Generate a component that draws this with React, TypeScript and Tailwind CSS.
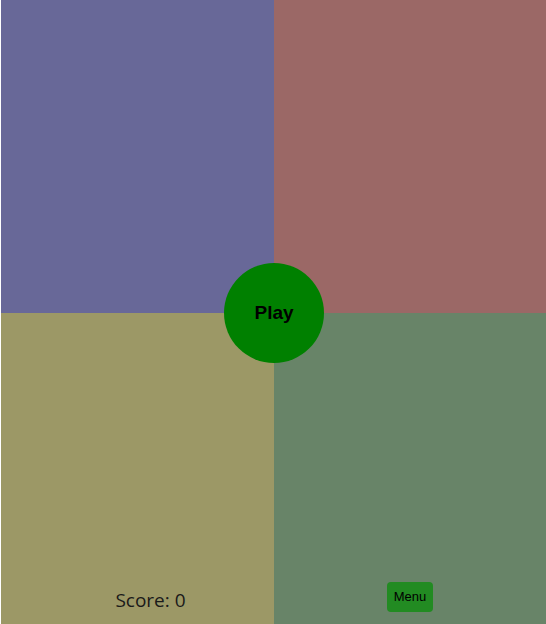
import React from "react";

export default function App() {
  return (
    <div className="relative w-[546px] h-[624px] overflow-hidden bg-white pl-px" style={{ fontFamily: '"Liberation Sans", Arial, sans-serif' }}>
      <div className="grid grid-cols-[273px_1fr] grid-rows-[313px_1fr] h-full">
        <div className="bg-[#686898]" />
        <div className="bg-[#9b6866]" />
        <div className="bg-[#9c9866] flex flex-col justify-end items-center pb-[12px] pl-[26px]">
          <span className="text-[19px] leading-[24px] text-[#1a1a1a]" style={{ fontFamily: '"Open Sans", "Noto Sans", sans-serif' }}>Score: 0</span>
        </div>
        <div className="bg-[#688468] flex flex-col justify-end items-center pb-[12px]">
          <button className="h-[30px] px-[7px] rounded-[4px] bg-[#228b22] text-[13px] text-black">Menu</button>
        </div>
      </div>
      <button className="absolute left-[224px] top-[263px] w-[100px] h-[100px] rounded-full bg-[#008000] text-black font-bold text-[19px]">Play</button>
    </div>
  );
}
